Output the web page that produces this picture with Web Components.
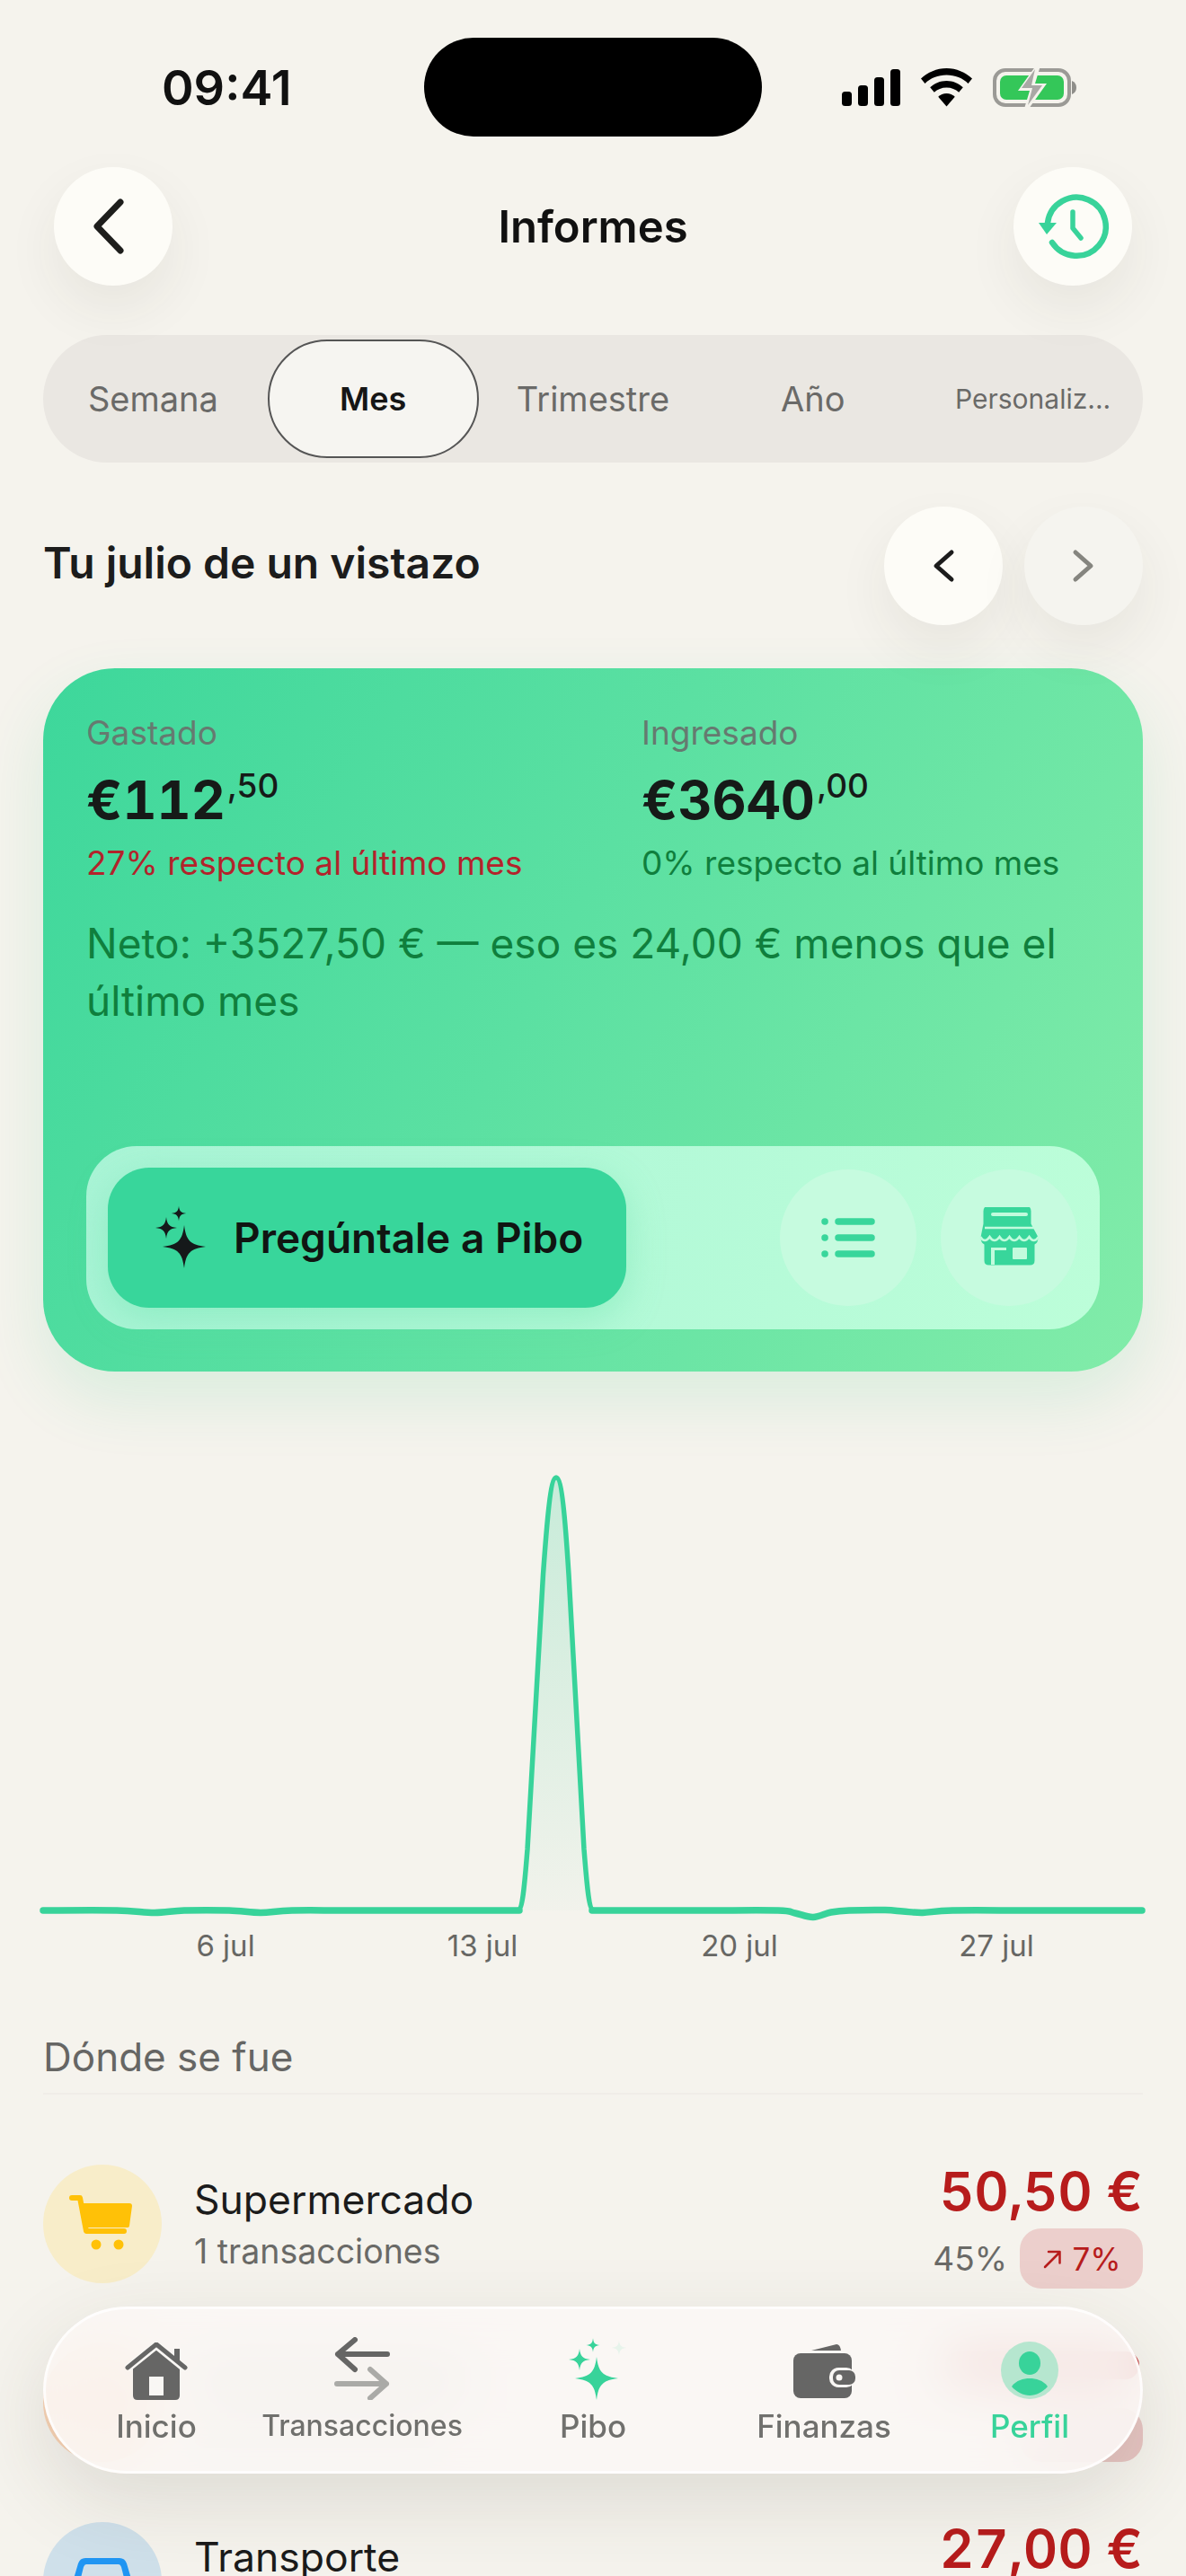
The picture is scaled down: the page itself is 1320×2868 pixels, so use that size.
<!DOCTYPE html>
<html lang="es">
<head>
<meta charset="utf-8">
<title>Informes</title>
<style>
  html, body { margin: 0; height: 2868px; overflow: hidden; background: #f5f3ed; }
  body { font-family: "Inter", "Liberation Sans", sans-serif; color: #1c1c1c; }
</style>
</head>
<body>
<status-bar></status-bar>
<top-bar title="Informes"></top-bar>
<period-tabs active="Mes"></period-tabs>
<section-head title="Tu julio de un vistazo"></section-head>
<summary-card>
  <stat-block slot="left" label="Gastado" whole="€112" cents=",50" note="27% respecto al último mes" tone="bad"></stat-block>
  <stat-block slot="right" label="Ingresado" whole="€3640" cents=",00" note="0% respecto al último mes" tone="good"></stat-block>
  <span slot="net">Neto: +3527,50 € — eso es 24,00 € menos que el último mes</span>
</summary-card>
<trend-chart></trend-chart>
<category-list title="Dónde se fue">
  <category-row name="Supermercado" sub="1 transacciones" amount="50,50 €" share="45%" delta="7%" tint="#f8edc9">
    <svg slot="icon" width="132" height="132" viewBox="0 0 132 132">
      <path d="M32 37h9l7 37h42" fill="none" stroke="#ffc107" stroke-width="6" stroke-linecap="round" stroke-linejoin="round"/>
      <path d="M44 43h52q3 0 3 3l-3 22q0 2-3 2H49z" fill="#ffc107"/>
      <circle cx="59" cy="89" r="5.5" fill="#ffc107"/><circle cx="84" cy="89" r="5.5" fill="#ffc107"/>
    </svg>
  </category-row>
  <ghost-row></ghost-row>
  <category-row name="Transporte" amount="27,00 €" tint="#cfe0ea">
    <svg slot="icon" width="132" height="132" viewBox="0 0 132 132">
      <path d="M47 40h38q6 0 8 6l5 17q6 3 6 10v20H28V73q0-7 6-10l5-17q2-6 8-6z" fill="#2196f3"/>
      <path d="M48 47h36q2 0 3 3l3 12H42l3-12q1-3 3-3z" fill="#cfe0ea"/>
    </svg>
  </category-row>
</category-list>
<bottom-nav></bottom-nav>

<script>
// Shared look of the round white buttons
const ROUND_BTN = `
  width: 132px; height: 132px; border-radius: 50%; background: #fdfcf7;
  display: flex; align-items: center; justify-content: center;
  box-shadow: 0 26px 60px rgba(60, 55, 40, 0.07);
`;

// Four pointed sparkle, radius 24, centred on 0,0
const STAR = "M0-24C2-7 7-2 24 0 7 2 2 7 0 24-2 7-7 2-24 0-7-2-2-7 0-24z";

class StatusBar extends HTMLElement {
  constructor() { super(); this.attachShadow({ mode: "open" }); }
  connectedCallback() {
    this.shadowRoot.innerHTML = `
      <style>
        :host { display: flex; height: 186px; box-sizing: border-box; padding-top: 42px; }
        .time { width: 472px; box-sizing: border-box; height: 110px; padding-left: 180px; display: flex; align-items: center;
                font: 600 54px "Inter", sans-serif; color: #111; }
        .island { width: 376px; height: 110px; border-radius: 55px; background: #000; }
        .icons { height: 110px; padding-left: 89px; display: flex; align-items: center; }
      </style>
      <div class="time">09:41</div>
      <div class="island"></div>
      <div class="icons">
        <svg width="261" height="43" viewBox="937 75 261 43">
          <g fill="#000">
            <rect x="937" y="101" width="11" height="16" rx="3.5"/>
            <rect x="955" y="94" width="11" height="23" rx="3.5"/>
            <rect x="973" y="85" width="11" height="32" rx="3.5"/>
            <rect x="991" y="76" width="11" height="41" rx="3.5"/>
            <path d="M1053.5 75c11 0 21 4.500 28.500 11.500l-4.500 5.500c-6-6-14.500-9.500-24-9.500s-18 3.500-24 9.500l-4.500-5.500c7.500-7 17.500-11.500 28.500-11.500z"/>
            <path d="M1053.500 89c7 0 13.500 2.800 18.300 7.200l-4.600 5.500c-3.500-3.300-8.400-5.300-13.700-5.300s-10.200 2-13.700 5.300l-4.600-5.500c4.800-4.400 11.300-7.200 18.300-7.200z"/>
            <path d="M1053.500 103c3.600 0 7 1.400 9.300 3.700l-9.300 10.800-9.300-10.800c2.300-2.300 5.700-3.700 9.300-3.700z"/>
          </g>
          <rect x="1107" y="77" width="83" height="39" rx="12" fill="none" stroke="#9b9a96" stroke-width="4"/>
          <path d="M1193 89q5 2 5 7.500t-5 7.500z" fill="#8f8e8a"/>
          <rect x="1113" y="83" width="71" height="27" rx="7" fill="#34c759"/>
          <path d="M1153 72l-20 28h13l-6 20 5 0 20-28h-13l6-20z" fill="#f5f3ed"/>
          <path d="M1152 76l-15 21h12l-5 19 16-22h-12z" fill="#a9a8a5"/>
        </svg>
      </div>`;
  }
}

class TopBar extends HTMLElement {
  constructor() { super(); this.attachShadow({ mode: "open" }); }
  connectedCallback() {
    const title = this.getAttribute("title") || "";
    this.shadowRoot.innerHTML = `
      <style>
        :host { display: flex; align-items: center; justify-content: space-between; padding: 0 60px; height: 132px; }
        .btn { ${ROUND_BTN} }
        h1 { margin: 0; font: 600 49px "Inter", sans-serif; color: #111; }
      </style>
      <div class="btn">
        <svg width="132" height="132" viewBox="0 0 132 132"><path d="M74 39L48 66l26 27" fill="none" stroke="#1e1e1c" stroke-width="7" stroke-linecap="round" stroke-linejoin="round"/></svg>
      </div>
      <h1>${title}</h1>
      <div class="btn">
        <svg width="132" height="132" viewBox="-66 -66 132 132">
          <path d="M-28-4A32.500 32.500 0 1 1-23 18" fill="none" stroke="#38d39a" stroke-width="6.500" stroke-linecap="round"/>
          <path d="M-38-4h20l-11 13z" fill="#38d39a"/>
          <path d="M0-16V2l9 11" fill="none" stroke="#38d39a" stroke-width="5.500" stroke-linecap="round" stroke-linejoin="round"/>
        </svg>
      </div>`;
  }
}

class PeriodTabs extends HTMLElement {
  constructor() { super(); this.attachShadow({ mode: "open" }); }
  connectedCallback() {
    const active = this.getAttribute("active");
    const tabs = ["Semana", "Mes", "Trimestre", "Año", "Personaliz..."];
    const items = tabs.map(t => {
      const cls = t === active ? "tab on" : t.length > 10 ? "tab small" : "tab";
      return `<div class="${cls}">${t}</div>`;
    }).join("");
    this.shadowRoot.innerHTML = `
      <style>
        :host { display: grid; grid-template-columns: repeat(5, 1fr); margin: 55px 48px 0; height: 142px; box-sizing: border-box;
                padding: 5px 0; border-radius: 71px; background: #eae7e2; }
        .tab { display: flex; align-items: center; justify-content: center; margin: 0 5px; border-radius: 66px;
               font: 400 38px "Inter", sans-serif; color: #6a6a68; box-sizing: border-box; }
        .on { background: #f6f5f1; border: 2.500px solid #555; font-weight: 600; font-size: 36px; color: #161616; }
        .small { font-size: 30px; white-space: nowrap; }
      </style>${items}`;
  }
}

class SectionHead extends HTMLElement {
  constructor() { super(); this.attachShadow({ mode: "open" }); }
  connectedCallback() {
    const title = this.getAttribute("title") || "";
    this.shadowRoot.innerHTML = `
      <style>
        :host { display: flex; align-items: center; margin: 49px 48px 0; height: 132px; }
        h2 { flex: 1; margin: -8px 0 0; font: 600 48px "Inter", sans-serif; color: #1c1c1c; }
        .nav { display: flex; gap: 24px; }
        .btn { ${ROUND_BTN} }
        .btn.off { background: #f5f4ef; }
      </style>
      <h2>${title}</h2>
      <div class="nav">
        <div class="btn"><svg width="40" height="48" viewBox="0 0 40 48"><path d="M29 9L12 24l17 15" fill="none" stroke="#1c1c1c" stroke-width="5" stroke-linecap="round" stroke-linejoin="round"/></svg></div>
        <div class="btn off"><svg width="40" height="48" viewBox="0 0 40 48"><path d="M11 9l17 15-17 15" fill="none" stroke="#85857f" stroke-width="5" stroke-linecap="round" stroke-linejoin="round"/></svg></div>
      </div>`;
  }
}

class StatBlock extends HTMLElement {
  constructor() { super(); this.attachShadow({ mode: "open" }); }
  connectedCallback() {
    const get = n => this.getAttribute(n) || "";
    const color = get("tone") === "bad" ? "#b3232b" : "#0f7f3d";
    this.shadowRoot.innerHTML = `
      <style>
        :host { display: block; font-family: "Inter", sans-serif; }
        .label { font-size: 37px; line-height: 44px; color: #667a70; }
        .value { display: flex; align-items: flex-start; height: 76px; margin-top: 15px; }
        .whole { font-size: 59px; line-height: 76px; font-weight: 700; color: #161a18; font-variant-numeric: tabular-nums; }
        .cents { font-size: 37px; line-height: 44px; font-weight: 500; color: #161a18; margin-left: 2px; }
        .note { font-size: 37px; line-height: 44px; margin-top: 10px; white-space: nowrap; color: ${color}; }
      </style>
      <div class="label">${get("label")}</div>
      <div class="value"><span class="whole">${get("whole")}</span><span class="cents">${get("cents")}</span></div>
      <div class="note">${get("note")}</div>`;
  }
}

class SummaryCard extends HTMLElement {
  constructor() { super(); this.attachShadow({ mode: "open" }); }
  connectedCallback() {
    this.shadowRoot.innerHTML = `
      <style>
        :host { display: flex; flex-direction: column; margin: 48px 48px 0; height: 783px; box-sizing: border-box; padding: 50px 48px 47px;
                border-radius: 80px; background: linear-gradient(118deg, #3dd79b 0%, #5be0a2 45%, #82eca9 100%);
                box-shadow: 0 30px 70px rgba(50, 200, 130, 0.14); font-family: "Inter", sans-serif; }
        .stats { display: grid; grid-template-columns: 618px 1fr; }
        .net { margin-top: 35px; font-size: 46px; line-height: 64px; color: #0f7f3d; }
        .actions { margin-top: auto; height: 204px; box-sizing: border-box; padding: 24px 25px 24px 24px; border-radius: 56px;
                   display: flex; align-items: center; background: linear-gradient(100deg, #a9f4d6, #bcfed9); }
        .ask { width: 577px; height: 156px; border-radius: 46px; background: #38d69b; display: flex; align-items: center; gap: 22px;
               padding-left: 52px; box-sizing: border-box; font-size: 46px; font-weight: 600; color: #101512;
               box-shadow: 0 12px 40px rgba(90, 220, 160, 0.35); }
        .ask svg { flex: none; overflow: visible; }
        .round { width: 152px; height: 152px; border-radius: 50%; background: #c6fbdf; display: flex; align-items: center; justify-content: center; }
        .first { margin-left: auto; margin-right: 27px; }
      </style>
      <div class="stats"><slot name="left"></slot><slot name="right"></slot></div>
      <div class="net"><slot name="net"></slot></div>
      <div class="actions">
        <div class="ask">
          <svg width="66" height="72" viewBox="0 0 66 72" fill="#15191a">
            <path d="${STAR}" transform="translate(33 46)"/>
            <path d="${STAR}" transform="translate(13 25) scale(.5)"/>
            <path d="${STAR}" transform="translate(27 9) scale(.34)"/>
          </svg>
          <span>Pregúntale a Pibo</span>
        </div>
        <div class="round first">
          <svg width="60" height="48" viewBox="0 0 60 48" stroke="#38d69b" stroke-width="7.500" stroke-linecap="round">
            <path d="M4 6h.1M4 24h.1M4 42h.1M19 6h37M19 24h37M19 42h37"/>
          </svg>
        </div>
        <div class="round">
          <svg width="69" height="68" viewBox="0 0 69 68">
            <path d="M14 1h41q6 0 6 6v14l8 15q0 6-4 8v18q0 5-5 5H14q-5 0-5-5V44q-4-2-4-8L8 21V7q0-6 6-6z" transform="translate(-2.500 -2.500)" fill="#38d69b"/>
            <rect x="14" y="6" width="41" height="4" rx="2" fill="#c2fbdd"/>
            <path d="M7 23h55" stroke="#c2fbdd" stroke-width="2.500"/>
            <path d="M2 33q5 8 10.500 0q5 8 11 0q5 8 11 0q5 8 11 0q5 8 11 0q5 8 10.500 0" fill="none" stroke="#c2fbdd" stroke-width="2.500"/>
            <path d="M14 45h17v19H14z" fill="#c2fbdd"/>
            <rect x="18" y="48" width="13" height="16" fill="#38d69b"/>
            <rect x="38" y="45" width="16" height="13" rx="1" fill="#c2fbdd"/>
          </svg>
        </div>
      </div>`;
  }
}

class TrendChart extends HTMLElement {
  constructor() { super(); this.attachShadow({ mode: "open" }); }

  // Smooth line through the points
  linePath(pts) {
    let d = `M${pts[0][0]} ${pts[0][1]}`;
    for (let i = 0; i < pts.length - 1; i++) {
      const p0 = pts[i - 1] || pts[i], p1 = pts[i], p2 = pts[i + 1], p3 = pts[i + 2] || p2;
      const c1x = p1[0] + (p2[0] - p0[0]) / 6, c1y = p1[1] + (p2[1] - p0[1]) / 6;
      const c2x = p2[0] - (p3[0] - p1[0]) / 6, c2y = p2[1] - (p3[1] - p1[1]) / 6;
      d += `C${c1x.toFixed(1)} ${c1y.toFixed(1)} ${c2x.toFixed(1)} ${c2y.toFixed(1)} ${p2[0]} ${p2[1]}`;
    }
    return d;
  }

  connectedCallback() {
    const flatL = [[48, 2127], [130, 2127], [172, 2129.500], [205, 2127], [255, 2127], [290, 2129.500], [325, 2127], [400, 2127], [578, 2127]];
    const flatR = [[659, 2127], [780, 2127], [866, 2127], [885, 2130], [905, 2134.500], [925, 2129], [945, 2127], [985, 2126.500], [1005, 2128], [1027, 2129.500], [1060, 2127], [1150, 2127], [1271, 2127]];
    const peak = "M576 2127C582 2127 584 2095 587 2059L604.500 1753C609 1690 613 1645 619 1645C625 1645 629 1690 633 1753L650 2059C653 2095 655 2127 661 2127";
    const labels = ["6 jul", "13 jul", "20 jul", "27 jul"].map(l => `<span>${l}</span>`).join("");
    this.shadowRoot.innerHTML = `
      <style>
        :host { display: block; margin-top: 73px; }
        svg { display: block; overflow: visible; }
        .ticks { display: grid; grid-template-columns: repeat(4, 286px); padding-left: 108px; }
        span { text-align: center; font: 400 33px/42px "Inter", sans-serif; color: #676764; }
      </style>
      <svg width="1320" height="545" viewBox="0 1600 1320 545">
        <defs><linearGradient id="fade" x1="0" y1="0" x2="0" y2="1">
          <stop offset="0" stop-color="#38d39a" stop-opacity=".24"/><stop offset="1" stop-color="#38d39a" stop-opacity=".02"/>
        </linearGradient></defs>
        <path d="${peak}Z" fill="url(#fade)"/>
        <g fill="none" stroke="#38d39a" stroke-linecap="round" stroke-linejoin="round">
          <path d="${peak}" stroke-width="5.500"/>
          <path d="${this.linePath(flatL)}" stroke-width="7.500"/>
          <path d="${this.linePath(flatR)}" stroke-width="7.500"/>
        </g>
      </svg>
      <div class="ticks">${labels}</div>`;
  }
}

class CategoryList extends HTMLElement {
  constructor() { super(); this.attachShadow({ mode: "open" }); }
  connectedCallback() {
    this.shadowRoot.innerHTML = `
      <style>
        :host { display: block; margin: 73px 48px 0; }
        h3 { margin: 0; padding-bottom: 10px; border-bottom: 2px solid #f0ede8; font: 400 44px/60px "Inter", sans-serif; color: #666664; }
        .rows { display: flex; flex-direction: column; gap: 67px; margin-top: 78px; }
      </style>
      <h3>${this.getAttribute("title") || ""}</h3>
      <div class="rows"><slot></slot></div>`;
  }
}

class CategoryRow extends HTMLElement {
  constructor() { super(); this.attachShadow({ mode: "open" }); }
  connectedCallback() {
    const get = n => this.getAttribute(n) || "";
    const sub = get("sub") ? `<div class="sub">${get("sub")}</div>` : "";
    const meta = get("share") ? `
      <div class="meta">
        <span class="share">${get("share")}</span>
        <span class="pill"><svg width="24" height="24" viewBox="0 0 24 24"><path d="M4 21L20 5M8 4h12.500v12.500" fill="none" stroke="#b71c1c" stroke-width="2.500" stroke-linecap="round" stroke-linejoin="round"/></svg>${get("delta")}</span>
      </div>` : "";
    this.shadowRoot.innerHTML = `
      <style>
        :host { display: flex; height: 132px; font-family: "Inter", sans-serif; }
        .icon { width: 132px; height: 132px; border-radius: 50%; background: ${get("tint")}; flex: none; }
        ::slotted(svg) { display: block; }
        .text { flex: 1; margin-left: 36px; padding-top: 11px; }
        .name { font-size: 44.500px; line-height: 56px; color: #1b1b1b; }
        .sub { margin-top: 8px; font-size: 37.500px; line-height: 44px; color: #6a6a67; }
        .right { display: flex; flex-direction: column; align-items: flex-end; margin-top: -3px; }
        .amount { font-size: 59.500px; line-height: 64px; font-weight: 600; color: #b71c1c; font-variant-numeric: tabular-nums; }
        .meta { display: flex; align-items: center; gap: 14px; margin-top: 10px; }
        .share { font-size: 37px; color: #6a6a67; }
        .pill { display: flex; align-items: center; justify-content: center; gap: 10px; width: 137px; height: 67px; border-radius: 24px;
                background: #eccfcc; font-size: 35px; color: #b71c1c; }
      </style>
      <div class="icon"><slot name="icon"></slot></div>
      <div class="text"><div class="name">${get("name")}</div>${sub}</div>
      <div class="right"><div class="amount">${get("amount")}</div>${meta}</div>`;
  }
}

// The row hidden behind the floating nav: nothing of it can be read, only its colours show through the blur
class GhostRow extends HTMLElement {
  constructor() { super(); this.attachShadow({ mode: "open" }); }
  connectedCallback() {
    this.shadowRoot.innerHTML = `
      <style>
        :host { display: flex; height: 132px; }
        .icon { width: 132px; height: 132px; border-radius: 50%; background: #f7d2b4; flex: none; }
        .text { flex: 1; margin-left: 36px; padding-top: 22px; }
        .bar { height: 36px; border-radius: 10px; background: #c9c9c6; }
        .name { width: 300px; }
        .sub { width: 270px; height: 28px; margin-top: 30px; background: #dad9d5; }
        .right { display: flex; flex-direction: column; align-items: flex-end; }
        .amount { width: 216px; height: 34px; margin: 9px 4px 0 0; border-radius: 17px; background: #c43a3a; }
        .pill { width: 137px; height: 67px; margin-top: 32px; border-radius: 24px; background: #e6c5c2; }
      </style>
      <div class="icon"></div>
      <div class="text"><div class="bar name"></div><div class="bar sub"></div></div>
      <div class="right"><div class="amount"></div><div class="pill"></div></div>`;
  }
}

class NavItem extends HTMLElement {
  constructor() { super(); this.attachShadow({ mode: "open" }); }
  connectedCallback() {
    const on = this.hasAttribute("active");
    const size = this.getAttribute("size") || 35;
    this.shadowRoot.innerHTML = `
      <style>
        :host { display: flex; flex-direction: column; align-items: center; }
        .ico { height: 72px; display: flex; align-items: flex-end; justify-content: center; }
        ::slotted(svg) { display: block; }
        .lbl { margin-top: 9px; font: 500 ${size}px/40px "Inter", sans-serif; white-space: nowrap; color: ${on ? "#38d39a" : "#70706d"}; }
      </style>
      <div class="ico"><slot></slot></div>
      <div class="lbl">${this.getAttribute("label") || ""}</div>`;
  }
}

class BottomNav extends HTMLElement {
  constructor() { super(); this.attachShadow({ mode: "open" }); }
  connectedCallback() {
    this.shadowRoot.innerHTML = `
      <style>
        /* floats over the list */
        :host { position: fixed; left: 48px; right: 48px; top: 2568px; height: 186px; box-sizing: border-box; border-radius: 93px;
                display: grid; grid-template-columns: 200px 258px 256px 258px 200px; justify-content: center; padding-top: 29px;
                background: rgba(250, 247, 244, 0.86); border: 3px solid rgba(255, 255, 255, 0.75);
                -webkit-backdrop-filter: blur(28px); backdrop-filter: blur(28px);
                box-shadow: 0 30px 90px rgba(60, 55, 40, 0.13); }
      </style>
      <nav-item label="Inicio">
        <svg width="70" height="64" viewBox="0 0 70 64">
          <path d="M9 26L35 4l26 22v33q0 5-5 5H14q-5 0-5-5z" fill="#666665"/>
          <path d="M2.500 29L35 3l32 26" fill="none" stroke="#f9f7f4" stroke-width="9"/>
          <path d="M3 28L35 2l32 26" fill="none" stroke="#666665" stroke-width="5" stroke-linecap="round" stroke-linejoin="round"/>
          <path d="M55 7h6v16l-6-5z" fill="#666665"/>
          <rect x="27" y="38" width="16" height="21" fill="#f9f7f4"/>
        </svg>
      </nav-item>
      <nav-item label="Transacciones" size="32">
        <svg width="62" height="70" viewBox="0 0 62 70" fill="none" stroke-width="6" stroke-linecap="round" stroke-linejoin="round">
          <path d="M59 19H4M23 3L4 19l19 17" stroke="#666665"/>
          <path d="M3 52h55M40 36l18 16-18 16" stroke="#aaaaa7"/>
        </svg>
      </nav-item>
      <nav-item label="Pibo">
        <svg width="70" height="70" viewBox="-35 -35 70 70" fill="#38d39a" style="overflow:visible">
          <path d="${STAR}" transform="translate(4 11)"/>
          <path d="${STAR}" transform="translate(-15 -10) scale(.5)"/>
          <path d="${STAR}" transform="translate(0 -26) scale(.32)"/>
          <path d="${STAR}" transform="translate(29 -23) scale(.34)" opacity=".1"/>
        </svg>
      </nav-item>
      <nav-item label="Finanzas">
        <svg width="70" height="62" viewBox="0 0 70 62">
          <path d="M21 7L49 0q4 0 5 7z" fill="#666665"/>
          <rect x="1" y="10" width="65" height="50" rx="8" fill="#666665"/>
          <rect x="41" y="26" width="29" height="22" rx="10" fill="#f9f7f4"/>
          <rect x="45" y="29" width="25" height="16" rx="7" fill="#666665"/>
          <circle cx="52" cy="37" r="3.500" fill="#f9f7f4"/>
        </svg>
      </nav-item>
      <nav-item label="Perfil" active>
        <svg width="66" height="66" viewBox="0 0 66 66">
          <circle cx="33" cy="33" r="32" fill="#b6e6cf"/>
          <ellipse cx="33" cy="25" rx="12" ry="13" fill="#38d39a"/>
          <path d="M13 51c5-7 13-9 20-9s15 2 20 9c-5 6-13 10-20 10s-15-4-20-10z" fill="#38d39a"/>
        </svg>
      </nav-item>`;
  }
}

customElements.define("status-bar", StatusBar);
customElements.define("top-bar", TopBar);
customElements.define("period-tabs", PeriodTabs);
customElements.define("section-head", SectionHead);
customElements.define("stat-block", StatBlock);
customElements.define("summary-card", SummaryCard);
customElements.define("trend-chart", TrendChart);
customElements.define("category-list", CategoryList);
customElements.define("category-row", CategoryRow);
customElements.define("ghost-row", GhostRow);
customElements.define("nav-item", NavItem);
customElements.define("bottom-nav", BottomNav);
</script>
</body>
</html>
